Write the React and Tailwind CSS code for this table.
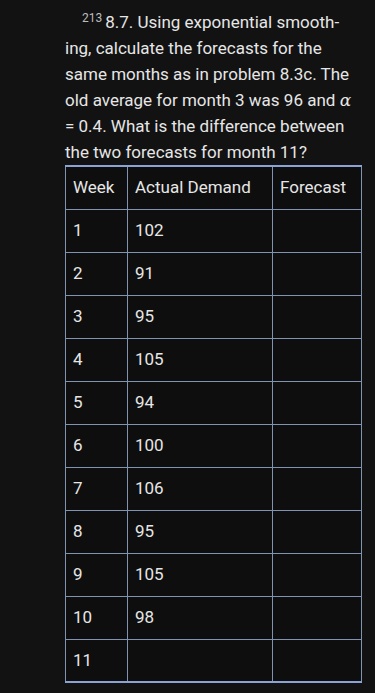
const rows = [
  ["1", "102"],
  ["2", "91"],
  ["3", "95"],
  ["4", "105"],
  ["5", "94"],
  ["6", "100"],
  ["7", "106"],
  ["8", "95"],
  ["9", "105"],
  ["10", "98"],
  ["11", ""],
];

export default function App() {
  return (
    <div
      className="min-h-[693px] w-[375px] bg-[#121212] text-[#e6e6e6] pl-[65px] pr-[13px] pt-[9px]"
      style={{ fontFamily: "Roboto, 'Noto Sans', sans-serif" }}
    >
      <p className="text-[17px] leading-[26px] indent-[17px]">
        <sup className="text-[12px] text-[#bdbdbd] mr-[3px]">213</sup>
        8.7. Using exponential smooth-
        <br />
        ing, calculate the forecasts for the same months as in problem 8.3c. The
        old average for month 3 was 96 and <span className="italic" style={{ fontFamily: "'DejaVu Serif', serif" }}>α</span> = 0.4. What is the difference between the two
        forecasts for month 11?
      </p>

      <table className="mt-[0px] w-[297px] border-collapse bg-[#0e0e0e] text-[17px] border-y-2 border-y-[#8aa3d4] border-x border-x-[#8193b3]">
        <thead>
          <tr className="h-[43px]">
            <th className="w-[62px] border border-[#8193b3] px-[7px] text-left font-normal">Week</th>
            <th className="w-[145px] border border-[#8193b3] px-[7px] text-left font-normal">Actual Demand</th>
            <th className="border border-[#8193b3] px-[7px] text-left font-normal">Forecast</th>
          </tr>
        </thead>
        <tbody>
          {rows.map(([w, d]) => (
            <tr key={w} className="h-[43px]">
              <td className="border border-[#8193b3] px-[7px]">{w}</td>
              <td className="border border-[#8193b3] px-[7px]">{d}</td>
              <td className="border border-[#8193b3] px-[7px]"></td>
            </tr>
          ))}
        </tbody>
      </table>
    </div>
  );
}
